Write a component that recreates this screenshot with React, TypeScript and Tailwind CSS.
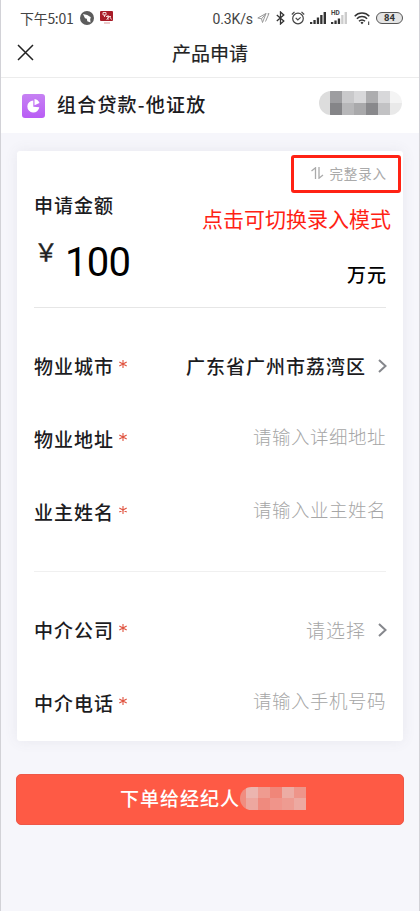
import React from 'react';
import clsx from 'clsx';

type Field = {
  label: string;
  value?: string;
  placeholder?: string;
  select?: boolean;
};

const propertyFields: Field[] = [
  { label: '物业城市', value: '广东省广州市荔湾区', select: true },
  { label: '物业地址', placeholder: '请输入详细地址' },
  { label: '业主姓名', placeholder: '请输入业主姓名' },
];

const agencyFields: Field[] = [
  { label: '中介公司', placeholder: '请选择', select: true },
  { label: '中介电话', placeholder: '请输入手机号码' },
];

function StatusBar() {
  return (
    <div className="flex h-9 items-center justify-between pl-[19px] pr-4 text-[#444]">
      <div className="flex items-center">
        <span className="mb-[1px] w-[53px] whitespace-nowrap text-[14px] leading-none tracking-[-0.3px]">下午5:01</span>
        <svg className="ml-[7px] h-[14px] w-[14px]" viewBox="0 0 14 14">
          <circle cx="7" cy="7" r="7" fill="#5c5c5c" />
          <path d="M3 3l4.300 1 3.500 2.200-.6 2 .3 3.300-3.200-1.300-.5-2.400-1.800-.5z" fill="#fff" />
        </svg>
        <svg className="ml-[6px] h-[14px] w-[13px]" viewBox="0 0 13 14">
          <rect width="13" height="10" rx="1" fill="#a81c28" />
          <path d="M3 1.500h3v2.500H3zM4.500 4v2M8 4v5M6 5.500h5M6.500 8.500l3-3 2 3" stroke="#f3d5d5" strokeWidth="1" fill="none" />
          <path d="M4 12h6" stroke="#d99" strokeWidth="1" />
        </svg>
      </div>
      <div className="flex items-center">
        <span className="mt-[1px] font-['Roboto',sans-serif] text-[14px] leading-none tracking-[-0.1px]">0.3K/s</span>
        <svg className="ml-1 h-3 w-[13px]" viewBox="0 0 13 12" fill="none" stroke="#999" strokeWidth="1">
          <path d="M.8 6L9 1.500 5.500 10.500 4.500 6.800zM4.500 6.800L9 1.500M8.500 9.500L12 1.500 10.500 2" />
        </svg>
        <svg className="ml-[6px] h-[14px] w-[9px]" viewBox="0 0 9 14" fill="none" stroke="#333" strokeWidth="1.300">
          <path d="M.8 4l7 6-3.300 3V1l3.300 3-7 6" />
        </svg>
        <svg className="ml-[6px] h-[14px] w-[14px]" viewBox="0 0 14 14" fill="none" stroke="#444" strokeWidth="1.200">
          <circle cx="7" cy="7.500" r="5.300" />
          <path d="M.8 3.500L3.500.9M10.500.9l2.700 2.600M4.700 6.800L6.800 9l2.800-2.600" />
        </svg>
        <svg className="ml-[5px] h-3 w-4" viewBox="0 0 16 12" fill="#333">
          <path d="M0 10h2.300v2H0zM3.400 8h2.300v4H3.400zM6.800 5.500h2.300V12H6.800zM10.200 3h2.300v9h-2.300zM13.600 0H16v12h-2.400z" />
        </svg>
        <div className="relative ml-[5px] h-[14px] w-4">
          <span className="absolute -top-[1px] left-0 font-['Roboto',sans-serif] text-[6.500px] font-bold leading-none">HD</span>
          <svg className="absolute bottom-[1px] left-0 h-3 w-4" viewBox="0 0 16 12">
            <path d="M0 10h2.300v2H0zM3.400 8.500h2.300V12H3.400zM6.800 6.500h2.300V12H6.800z" fill="#333" />
            <path d="M10.200 3h2.300v9h-2.300zM13.600 0H16v12h-2.400z" fill="#ccc" />
          </svg>
        </div>
        <svg className="ml-[7px] h-[13px] w-4" viewBox="0 0 16 13" fill="none" stroke="#333" strokeWidth="1.500">
          <path d="M.7 4.200a10 10 0 0 1 14.600 0M2.900 6.800a7 7 0 0 1 10.200 0M5 9.200a4.100 4.100 0 0 1 6 0" />
          <path d="M6.500 10.700a2 2 0 0 1 3 0L8 12.300z" fill="#333" stroke="none" />
          <path d="M14.700 9.500V13" strokeWidth="1" />
        </svg>
        <div className="ml-[6px] flex h-3 w-[27px] items-center justify-center rounded-full border-[1.5px] border-[#555] bg-[#e4e4e4] font-['Roboto',sans-serif] text-[9.500px] font-bold leading-none text-[#333]">
          84
        </div>
      </div>
    </div>
  );
}

function Chevron() {
  return (
    <svg className="-mr-[1px] mb-[1px] ml-3 h-[14px] w-[9px]" viewBox="0 0 9 14" fill="none" stroke="#85878c" strokeWidth="2">
      <path d="M1 1l6.500 6L1 13" />
    </svg>
  );
}

function FieldRow({ field }: { field: Field }) {
  return (
    <div className="flex h-[73px] items-center justify-between">
      <div className="flex items-center pb-[3px]">
        <span className="text-[19px] font-medium tracking-[1px] text-[#1c1c1f]">{field.label}</span>
        <svg className="mb-[4px] ml-[5px] h-2 w-2" viewBox="0 0 8 8" stroke="#e0533f" strokeWidth="1.100">
          <path d="M4 0v8M.3 2l7.400 4M7.700 2L.3 6" />
        </svg>
      </div>
      <div className={clsx('flex items-center', field.select ? 'pb-[2px]' : 'pb-[8px]')}>
        {field.value ? (
          <span className="text-[19px] font-medium tracking-[1px] text-[#1c1c1f]">{field.value}</span>
        ) : (
          <span
            className={clsx(
              'font-light text-[#a6a6a6]',
              field.select ? 'text-[19px] tracking-[1px]' : 'text-[18.500px] tracking-[0.5px]',
            )}
          >
            {field.placeholder}
          </span>
        )}
        {field.select && <Chevron />}
      </div>
    </div>
  );
}

export default function App() {
  return (
    <div className="h-[911px] w-[420px] overflow-hidden border-x border-[#d2d2d7] bg-[#f6f6fb] font-['Noto_Sans_CJK_SC',sans-serif]">
      <div className="bg-white">
        <StatusBar />
        <div className="relative flex h-[42px] items-center justify-center border-b border-[#ececec] pb-[9px]">
          <svg className="absolute left-4 top-2 h-[17px] w-[17px]" viewBox="0 0 17 17" stroke="#222" strokeWidth="1.500">
            <path d="M1 1l15 15M16 1L1 16" />
          </svg>
          <h1 className="text-[19px] font-normal leading-none text-[#222] [-webkit-text-stroke:0.2px_#222]">产品申请</h1>
        </div>
        <div className="flex h-[55px] items-center pl-[21px] pr-[17px]">
          <div className="flex h-6 w-[23px] items-center justify-center rounded-[3px] bg-gradient-to-b from-[#c681f3] to-[#b95cf5]">
            <svg className="h-[14px] w-[14px]" viewBox="0 0 14 14" fill="#fff">
              <path d="M6.300 1.500A6 6 0 1 0 12.300 8.200L6.300 7.700z" />
              <path d="M7.500 0a6 6 0 0 1 5 4L7.500 6.300z" />
            </svg>
          </div>
          <span className="mb-[2px] ml-3 text-[19px] font-medium tracking-[1.200px] text-[#1c1c1f]">组合贷款-他证放</span>
          <div className="mb-[5px] ml-auto grid h-6 w-[83px] grid-cols-[11px_repeat(6,12px)] grid-rows-2 overflow-hidden rounded-full">
            <i className="bg-[#dddddd]" />
            <i className="bg-[#9d9da0]" />
            <i className="bg-[#c9c9cb]" />
            <i className="bg-[#d8d8da]" />
            <i className="bg-[#adadaf]" />
            <i className="bg-[#d8d8da]" />
            <i className="bg-[#f4f4f4]" />
            <i className="bg-[#dddddd]" />
            <i className="bg-[#858588]" />
            <i className="bg-[#b7b7b9]" />
            <i className="bg-[#a9a9ab]" />
            <i className="bg-[#89898c]" />
            <i className="bg-[#c2c2c4]" />
            <i className="bg-[#e9e9e9]" />
          </div>
        </div>
      </div>

      <div className="relative mx-4 mt-[18px] h-[590px] rounded-[3px] bg-white pl-[17px] pr-[17px] shadow-[0_0_14px_rgba(90,90,110,0.09)]">
        <div className="flex h-11 items-center justify-end text-[#aaa]">
          <svg className="mr-[5px] h-3 w-[13px]" viewBox="0 0 13 12" fill="none" stroke="#aaa" strokeWidth="1.300">
            <path d="M.5 4L4.500.8V12M8 0v11.200L12 8" />
          </svg>
          <span className="-mr-[1px] text-[13.500px] tracking-[0.9px]">完整录入</span>
        </div>
        <div className="absolute left-[274px] top-1 h-[38px] w-[110px] rounded-[3px] border-[3px] border-[#ff2214]" />
        <p className="absolute left-[185px] top-[51px] whitespace-nowrap text-[21px] leading-8 text-[#ff2214]">
          点击可切换录入模式
        </p>

        <h2 className="relative -top-[1px] text-[19px] font-medium leading-[22px] tracking-[1px] text-[#1c1c1f]">申请金额</h2>
        <div className="flex h-[91px] items-start border-b border-[#e6e6e6] text-black">
          <span className="mt-[19px] w-[31px] font-['Noto_Sans_CJK_JP',sans-serif] text-[24px] leading-[30px] text-[#222] [-webkit-text-stroke:0.4px_#222]">￥</span>
          <span className="mt-[22px] font-['Roboto',sans-serif] text-[40px] leading-[48px] tracking-[-0.7px]">100</span>
          <span className="-mr-[1px] ml-auto mt-[46px] text-[19px] font-medium leading-[22px] tracking-[1px]">万元</span>
        </div>

        <div className="h-[264px] border-b border-[#f0f0f0] pt-[23px]">
          {propertyFields.map((field) => (
            <FieldRow key={field.label} field={field} />
          ))}
        </div>
        <div className="pt-[23px]">
          {agencyFields.map((field) => (
            <FieldRow key={field.label} field={field} />
          ))}
        </div>
      </div>

      <button className="ml-[15px] mt-[33px] flex h-[51px] w-[388px] items-center rounded-[5px] border border-[#ee5748] bg-[#fe5a45] pl-[103px]">
        <span className="mb-[2px] text-[19px] font-medium tracking-[1px] text-white">下单给经纪人</span>
        <div className="mb-[3px] grid h-[23px] w-[66px] grid-cols-[6px_repeat(5,12px)] grid-rows-2 overflow-hidden rounded-l-full rounded-r-[5px]">
          <i className="bg-[#f08d80]" />
          <i className="bg-[#ecb5af]" />
          <i className="bg-[#ef9b90]" />
          <i className="bg-[#f08679]" />
          <i className="bg-[#ecaca4]" />
          <i className="bg-[#ee958a]" />
          <i className="bg-[#f08d80]" />
          <i className="bg-[#eda79f]" />
          <i className="bg-[#ef8a7e]" />
          <i className="bg-[#f0948a]" />
          <i className="bg-[#ee9b91]" />
          <i className="bg-[#eda9a1]" />
        </div>
      </button>
    </div>
  );
}
